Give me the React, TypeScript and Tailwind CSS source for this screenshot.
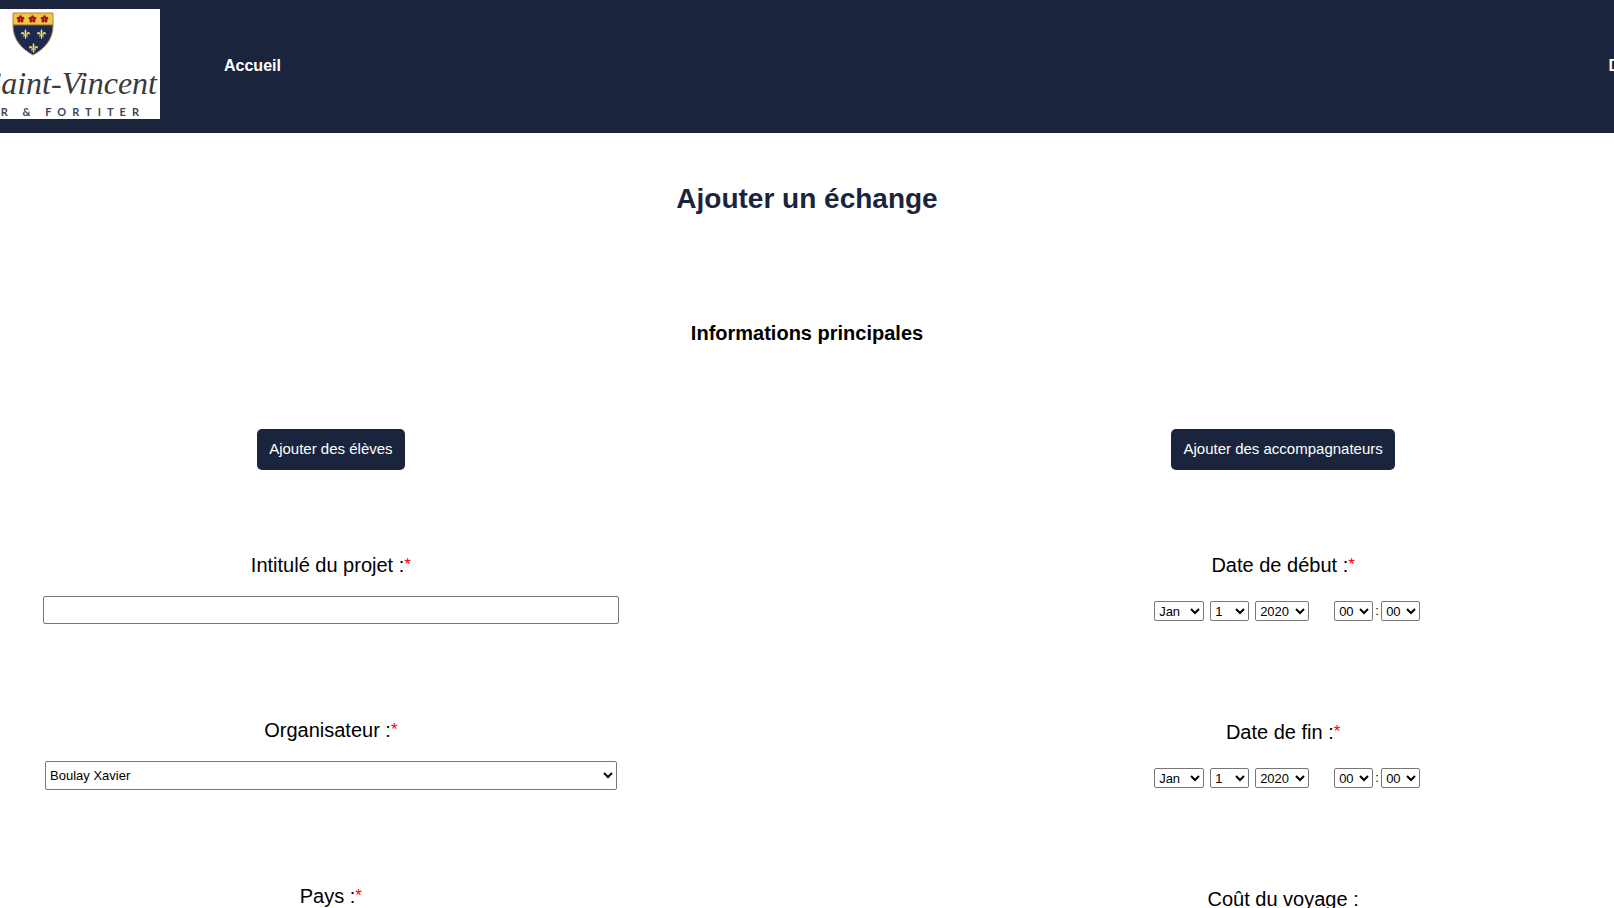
import { FC, ReactNode, useState } from "react";

const MONTHS = ["Jan", "Feb", "Mar", "Apr", "May", "Jun", "Jul", "Aug", "Sep", "Oct", "Nov", "Dec"];
const DAYS = Array.from({ length: 31 }, (_, i) => String(i + 1));
const YEARS = Array.from({ length: 10 }, (_, i) => String(2020 + i));
const HOURS = Array.from({ length: 24 }, (_, i) => String(i).padStart(2, "0"));
const MINUTES = Array.from({ length: 60 }, (_, i) => String(i).padStart(2, "0"));

const Shield = () => (
  <svg className="w-[42px] h-[44px] shrink-0" viewBox="0 0 42 44" aria-hidden="true">
    <defs>
      <g id="lys" fill="#f3dc6b">
        <path d="M0-5.200C1-3.400 1.200-1.600.5 1.200h-1C-1.200-1.600-1-3.400 0-5.200z" />
        <path d="M-.7 1.200C-1-1.200-2.400-2.600-3.800-1.700c-1.200 1-.5 2.600.6 2.300-.5-.9.6-1.300 1-.5.3.5.4.8.4 1.100z" />
        <path d="M.7 1.200C1-1.200 2.400-2.600 3.800-1.700c1.200 1 .5 2.600-.6 2.300.5-.9-.6-1.300-1-.5-.3.5-.4.8-.4 1.100z" />
        <path d="M-2.200 1.200h4.400v.8h-4.400z" />
        <path d="M-.5 2h1L.8 3.800 0 5.200-.8 3.800zM-1 2-2.300 4-1.800 2zM1 2 2.300 4 1.800 2z" />
      </g>
      <g id="rose" fill="#a3121c">
        <circle cx="0" cy="-2.300" r="1.500" />
        <circle cx="2.300" cy="-.8" r="1.500" />
        <circle cx="1.500" cy="2" r="1.500" />
        <circle cx="-1.500" cy="2" r="1.500" />
        <circle cx="-2.300" cy="-.8" r="1.500" />
        <circle r="1.800" />
        <circle r=".7" fill="#d8693a" />
      </g>
    </defs>
    <path d="M1 1h40v13c0 13-8 22.500-20 29C9 36.500 1 27 1 14z" fill="#1b2a4e" />
    <path d="M1 1h40v12H1z" fill="#f2c643" />
    <path d="M1 13h40" stroke="#8d6a2c" />
    <path d="M1 1h40v13c0 13-8 22.500-20 29C9 36.500 1 27 1 14z" fill="none" stroke="#b5813f" />
    <use href="#rose" x="8.500" y="7" />
    <use href="#rose" x="20.500" y="7" />
    <use href="#rose" x="32.500" y="7" />
    <use href="#lys" x="13.500" y="22" />
    <use href="#lys" x="29.500" y="22" />
    <use href="#lys" x="21.500" y="36" />
  </svg>
);

const Header = () => (
  <header className="bg-[#1a253d] text-white overflow-hidden">
    {/* the bar is wider than the window on both sides */}
    <div className="-mx-[95px] flex items-center pt-[9px] pb-[14px]">
      <a
        href="#"
        className="flex flex-col items-center shrink-0 w-[255px] h-[110px] pt-[3px] bg-white text-[#3a3a3c]"
      >
        <Shield />
        <span className="mt-1.5 pr-[3px] self-end font-['Liberation_Serif'] italic text-[32px] leading-[42px] whitespace-nowrap">
          Lycée Saint-Vincent
        </span>
        <span className="pr-1.5 font-['Lato'] font-bold text-[11px] leading-4 tracking-[6px] text-[#3d4563] whitespace-nowrap">
          SUAVITER &amp; FORTITER
        </span>
      </a>
      <nav className="ml-16 mt-1 flex flex-1 justify-between font-bold">
        <a href="#">Accueil</a>
        <a href="#">Déconnexion</a>
      </nav>
    </div>
  </header>
);

const Field: FC<{
  label: string;
  htmlFor: string;
  required?: boolean;
  children: ReactNode;
}> = ({ label, htmlFor, required, children }) => (
  <div className="flex flex-col items-center w-full">
    <label htmlFor={htmlFor} className="flex items-start mb-[19px] text-[20px] leading-6">
      {label}
      {required && <span className="text-[17px] leading-6 text-[#ff0000]">*</span>}
    </label>
    {children}
  </div>
);

const SmallSelect: FC<{
  id?: string;
  label: string;
  options: string[];
  className: string;
}> = ({ id, label, options, className }) => (
  <select
    id={id}
    aria-label={label}
    className={`h-5 bg-white border border-[#767676] rounded-[2px] text-[13px] ${className}`}
  >
    {options.map((o) => (
      <option key={o}>{o}</option>
    ))}
  </select>
);

const DateTimeSelect: FC<{ id: string }> = ({ id }) => (
  <div className="flex items-center h-[30px] pl-2">
    <SmallSelect id={id} label="Mois" options={MONTHS} className="w-[50px] mr-1.5" />
    <SmallSelect label="Jour" options={DAYS} className="w-[39px] mr-1.5" />
    <SmallSelect label="Année" options={YEARS} className="w-[54px] mr-[25px]" />
    <SmallSelect label="Heure" options={HOURS} className="w-[39px]" />
    <span className="w-2 text-center text-[13px] leading-5">:</span>
    <SmallSelect label="Minute" options={MINUTES} className="w-[39px]" />
  </div>
);

const AddButton: FC<{ children: ReactNode }> = ({ children }) => (
  <button
    type="button"
    className="h-[41px] mb-[83px] px-3 bg-[#1a253d] text-white text-[15px] rounded-[5px] cursor-pointer"
  >
    {children}
  </button>
);

export default function App() {
  const [title, setTitle] = useState("");

  return (
    <div className="min-h-screen bg-white text-black font-['Liberation_Sans',Arial,sans-serif]">
      <Header />
      <main className="text-center">
        <h1 className="mt-[50px] text-[28px] leading-8 font-bold text-[#1a253d]">
          Ajouter un échange
        </h1>
        <h2 className="mt-[106px] text-[20px] leading-6 font-bold">Informations principales</h2>
        <form className="mt-[84px] flex justify-between">
          <div className="flex flex-col items-center w-[41%]">
            <AddButton>Ajouter des élèves</AddButton>
            <div className="flex flex-col gap-[94px] w-full">
              <Field label="Intitulé du projet :" htmlFor="title" required>
                <input
                  id="title"
                  type="text"
                  value={title}
                  onChange={(e) => setTitle(e.target.value)}
                  className="w-[87%] h-7 px-1 border border-[#767676] rounded-[2px] text-[13px]"
                />
              </Field>
              <Field label="Organisateur :" htmlFor="organizer" required>
                <select
                  id="organizer"
                  className="w-[calc(87%-4px)] h-[29px] bg-white border border-[#767676] rounded-[2px] text-[13px]"
                >
                  <option>Boulay Xavier</option>
                </select>
              </Field>
              <Field label="Pays :" htmlFor="country" required>
                <input
                  id="country"
                  type="text"
                  className="w-[87%] h-7 px-1 border border-[#767676] rounded-[2px] text-[13px]"
                />
              </Field>
            </div>
          </div>
          <div className="flex flex-col items-center w-[41%]">
            <AddButton>Ajouter des accompagnateurs</AddButton>
            <div className="flex flex-col gap-[94px] w-full">
              <Field label="Date de début :" htmlFor="start" required>
                <DateTimeSelect id="start" />
              </Field>
              <Field label="Date de fin :" htmlFor="end" required>
                <DateTimeSelect id="end" />
              </Field>
              <Field label="Coût du voyage :" htmlFor="cost">
                <input
                  id="cost"
                  type="text"
                  className="w-[87%] h-7 px-1 border border-[#767676] rounded-[2px] text-[13px]"
                />
              </Field>
            </div>
          </div>
        </form>
      </main>
    </div>
  );
}
